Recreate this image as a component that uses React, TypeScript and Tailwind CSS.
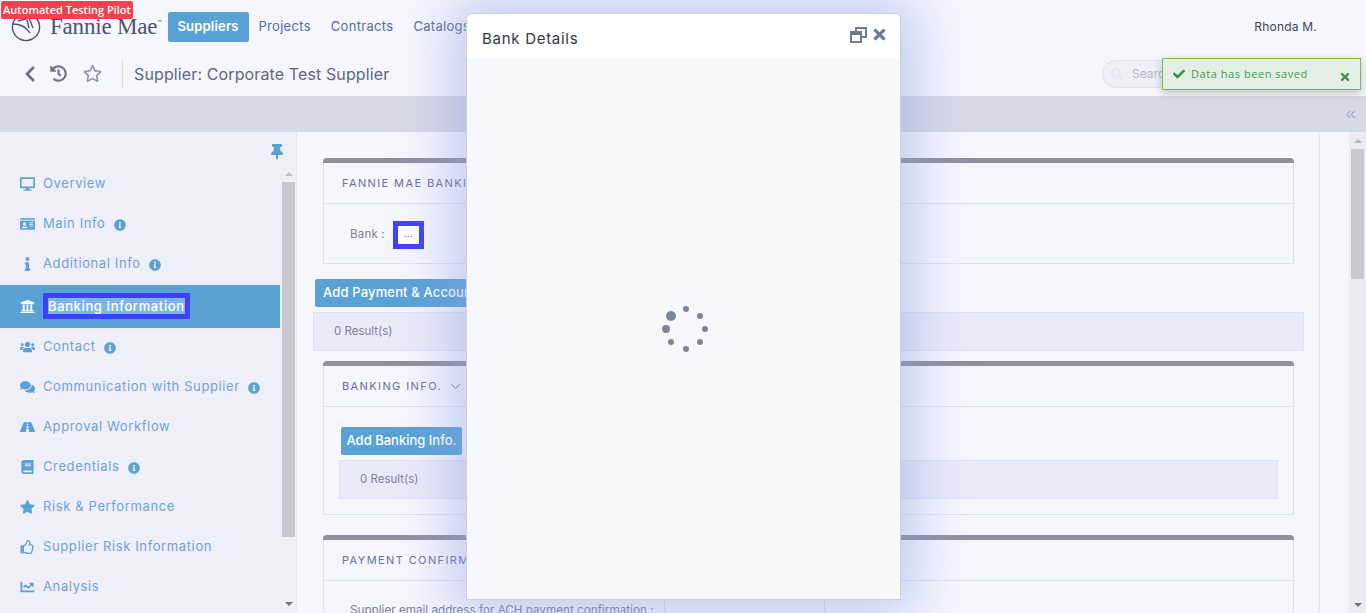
import { ChevronDown, ChevronsLeft } from "lucide-react";
import {
  FaBook,
  FaChartLine,
  FaCheck,
  FaChevronLeft,
  FaComments,
  FaDesktop,
  FaHistory,
  FaIdCard,
  FaInfo,
  FaInfoCircle,
  FaRegStar,
  FaRegThumbsUp,
  FaRoad,
  FaSearch,
  FaStar,
  FaThumbtack,
  FaTimes,
  FaUniversity,
  FaUsers,
} from "react-icons/fa";

const menu = [
  { label: "Overview", icon: FaDesktop },
  { label: "Main Info", icon: FaIdCard, info: true },
  { label: "Additional Info", icon: FaInfo, info: true },
  { label: "Banking Information", icon: FaUniversity, active: true },
  { label: "Contact", icon: FaUsers, info: true },
  { label: "Communication with Supplier", icon: FaComments, info: true },
  { label: "Approval Workflow", icon: FaRoad },
  { label: "Credentials", icon: FaBook, info: true },
  { label: "Risk & Performance", icon: FaStar },
  { label: "Supplier Risk Information", icon: FaRegThumbsUp },
  { label: "Analysis", icon: FaChartLine },
];

function Logo() {
  return (
    <svg width="30" height="30" viewBox="0 0 30 30" fill="none" stroke="#4a5470" strokeWidth="1.4">
      <circle cx="15" cy="15" r="13.6" />
      <path d="M2 12c7 0 13 3 17 9M7 9l11-3 4 10M16 8l2 8" />
    </svg>
  );
}

function RestoreIcon() {
  return (
    <svg width="17" height="16" viewBox="0 0 17 16" fill="none" stroke="#6f7a8f" strokeWidth="2">
      <path d="M6 4V1h10v9h-4" />
      <rect x="1" y="5" width="10" height="10" />
      <path d="M1 7h10" />
    </svg>
  );
}

function Card({ title, chevron, children }: { title: string; chevron?: boolean; children: React.ReactNode }) {
  return (
    <section className="shrink-0 border border-[#e0e1f2] border-t-0 rounded-t-[4px] ml-[26px] mr-[25px]">
      <div className="h-[5px] bg-[#8f8f9e] rounded-t-[4px] -mx-px" />
      <div className="h-[41px] flex items-center gap-[6px] pl-[18px] border-b border-[#e0e1f2] text-[11px] tracking-[1.4px] text-[#6a7196]">
        <span>{title}</span>
        {chevron && <ChevronDown size={15} strokeWidth={1.5} className="text-[#6a7196]" />}
      </div>
      {children}
    </section>
  );
}

function Results({ className }: { className: string }) {
  return (
    <div className={`shrink-0 h-[39px] flex items-center bg-[#e9ebf8] border border-[#dbe3f7] pl-5 text-[11.5px] text-[#7d8198] ${className}`}>
      0 Result(s)
    </div>
  );
}

export default function App() {
  return (
    <div className="relative h-[613px] overflow-hidden flex flex-col bg-[#f5f6fe] font-['Inter','Open_Sans',sans-serif]">
      {/* Верхнее меню */}
      <header className="h-[50px] shrink-0 flex items-center pt-[4px] pl-[11px] pr-[49px]">
        <Logo />
        <span className="ml-[9px] font-['Liberation_Serif',serif] text-[23px] tracking-[-0.2px] text-[#4a5470]">Fannie Mae</span>
        <span className="self-start mt-[15px] text-[7px] text-[#4a5470]">™</span>
        <a className="ml-[6px] h-[30px] w-[81px] shrink-0 flex items-center justify-center rounded-[2px] bg-[#5aa2d6] text-white text-[13px] font-semibold tracking-[0.2px]">
          Suppliers
        </a>
        <nav className="flex gap-5 ml-[10px] text-[13px] tracking-[0.3px] text-[#4f6fa8]">
          <a>Projects</a>
          <a>Contracts</a>
          <a>Catalogs</a>
        </nav>
        <span className="ml-auto text-[12px] tracking-[0.2px] text-[#3f4557]">Rhonda M.</span>
      </header>

      <div className="h-[46px] shrink-0 flex items-center pt-px pl-[21px] pr-[6px]">
        <FaChevronLeft className="text-[18px] text-[#76708f]" />
        <FaHistory className="ml-[11px] text-[17px] text-[#76708f]" />
        <FaRegStar className="ml-[16px] text-[19px] text-[#8c90ad]" />
        <div className="ml-[20px] w-px h-[30px] bg-[#dcdde8]" />
        <h1 className="ml-[11px] text-[16px] tracking-[0.12px] text-[#62677b]">Supplier: Corporate Test Supplier</h1>
        <div className="ml-auto mr-[158px] w-[100px] h-[28px] rounded-full border border-[#dfe0ec] bg-[#eeeff8] flex items-center gap-[9px] pl-2 text-[12px] text-[#b7b9cc] overflow-hidden">
          <FaSearch className="shrink-0 text-[#e4e5f2]" />
          Search
        </div>
      </div>

      <div className="h-[36px] shrink-0 bg-[#d6dae6] flex items-center justify-end pr-2">
        <ChevronsLeft size={15} strokeWidth={1.5} className="text-[#7f84a5]" />
      </div>

      <div className="flex flex-1 min-h-0">
        {/* Боковое меню */}
        <aside className="w-[297px] shrink-0 flex flex-col bg-[#eeeff8] border-r border-[#e6e7f3]">
          <div className="h-[33px] shrink-0 flex items-end justify-end pr-[11px] pb-[5px]">
            <FaThumbtack className="text-[16px] text-[#5aa2d6]" />
          </div>
          <div className="flex flex-1 min-h-0">
            <ul className="w-[280px] shrink-0 -mt-px text-[13px] tracking-[0.62px] text-[#6ea3d8]">
              {menu.map((item) =>
                item.active ? (
                  <li key={item.label} className="h-[43px] mt-px -mb-px pb-px flex items-center pl-5 bg-[#5aa2d6] text-white font-medium">
                    <item.icon className="w-[15px] text-[15px]" />
                    <span className="ml-2 border-[5px] border-[#4040ff] bg-[#7fb5e2] leading-[16px]">{item.label}</span>
                  </li>
                ) : (
                  <li key={item.label} className="h-10 flex items-center pl-5">
                    <item.icon className="w-[15px] text-[14px] text-[#5aa2d6]" />
                    <span className="ml-2">{item.label}</span>
                    {item.info && <FaInfoCircle className="ml-2 mt-[2px] text-[12px] text-[#5aa2d6]" />}
                  </li>
                ),
              )}
            </ul>
            <div className="w-[15px] ml-px flex flex-col items-center">
              <div className="h-[17px] shrink-0 flex items-center justify-center">
                <div className="border-x-[4px] border-b-[4px] border-x-transparent border-b-[#c0c1cc]" />
              </div>
              <div className="w-[13px] h-[355px] shrink-0 bg-[#c7c8d3]" />
              <div className="flex-1" />
              <div className="mb-[7px] border-x-[4px] border-t-[4px] border-x-transparent border-t-[#70717e]" />
            </div>
          </div>
        </aside>

        {/* Основная панель */}
        <main className="w-[1023px] shrink-0 flex flex-col pt-[26px] overflow-hidden border-r border-[#e0e1f2] rounded-tr-[4px]">
          <Card title="FANNIE MAE BANKING">
            <div className="h-[59px] flex items-center pt-[2px] pl-[26px] gap-[8px] text-[11.5px] tracking-[0.2px] text-[#7d8198]">
              Bank :
              <button className="w-[31px] h-[28px] flex items-center justify-center border-[5px] border-[#4040ff] bg-white pb-[4px] text-[10px] leading-none text-[#5a5f80]">...</button>
            </div>
          </Card>
          <div className="shrink-0 mt-[15px] ml-[18px] w-[300px] h-[28px] flex items-center pl-2 rounded-[2px] bg-[#5aa2d6] text-white text-[13px] tracking-[0.15px] font-medium">
            Add Payment &amp; Account
          </div>
          <Results className="mt-[5px] ml-4 mr-[15px]" />
          <div className="mt-[10px] shrink-0">
            <Card title="BANKING INFO." chevron>
              <div className="pt-[20px] pb-[15px] px-[15px]">
                <div className="ml-[2px] w-[121px] h-[28px] flex items-center justify-center rounded-[2px] bg-[#5aa2d6] text-white text-[13px] font-medium">
                  Add Banking Info.
                </div>
                <Results className="mt-[5px]" />
              </div>
            </Card>
          </div>
          <div className="mt-5 shrink-0">
            <Card title="PAYMENT CONFIRMATION">
              <div className="flex items-start h-[40px] pt-[20px] pl-[26px] text-[11.7px] text-[#7d8198]">
                <span className="w-[314px] shrink-0 whitespace-nowrap leading-[18px]">Supplier email address for ACH payment confirmation :</span>
                <div className="-mt-[10px] w-[161px] h-[40px] border border-[#e0e1f2]" />
              </div>
            </Card>
          </div>
        </main>

        <div className="flex-1" />
        <div className="w-[17px] shrink-0 bg-[#ecebf4] flex flex-col items-center">
          <div className="h-[17px] shrink-0 flex items-center justify-center">
            <div className="border-x-[4px] border-b-[4px] border-x-transparent border-b-[#b5b6c2]" />
          </div>
          <div className="w-[13px] h-[130px] shrink-0 bg-[#c7c8d3]" />
          <div className="flex-1" />
          <div className="mb-[6px] border-x-[4px] border-t-[4px] border-x-transparent border-t-[#70717e]" />
        </div>
      </div>

      {/* Оверлеи */}
      <div className="absolute left-px top-px w-[132px] h-[18px] flex items-center justify-center rounded-[2px] bg-[#f7404e] text-white text-[11px] font-semibold font-['Open_Sans',sans-serif]">
        Automated Testing Pilot
      </div>

      <div className="absolute left-[1162px] top-[58px] w-[199px] h-[32px] flex items-center pl-[10px] border border-[#74c04c] bg-[#e3efe2] text-[#3f9c55] text-[11px] tracking-[0.55px] shadow-[0_3px_8px_rgba(60,60,90,0.3)] font-['Open_Sans',sans-serif]">
        <FaCheck className="text-[12px] text-[#3c8f4e]" />
        <span className="ml-[6px]">Data has been saved</span>
        <FaTimes className="absolute right-[9px] top-[12px] text-[12px] text-[#3c8f4e]" />
      </div>

      <div className="absolute left-[466px] top-[13px] w-[435px] h-[587px] flex flex-col rounded-t-[5px] border border-[#cfd0d4] bg-[#f7f8fb] shadow-[0_0_55px_12px_rgba(140,160,225,0.55)]">
        <div className="h-[44px] shrink-0 flex items-center justify-between pl-[15px] pr-[12px] bg-white rounded-t-[5px]">
          <h2 className="mt-[6px] text-[15px] tracking-[0.72px] text-[#33363f]">Bank Details</h2>
          <div className="flex items-center gap-[4px] -mt-[3px]">
            <RestoreIcon />
            <FaTimes className="text-[17px] text-[#6f7a8f]" />
          </div>
        </div>
        <div className="flex-1 flex items-center justify-center pl-[3px]">
          <svg width="50" height="50" viewBox="660 304 50 50" fill="#7d8598">
            <circle cx="686" cy="309" r="3" />
            <circle cx="700" cy="316" r="3" />
            <circle cx="705" cy="329" r="3" />
            <circle cx="700" cy="342" r="3" />
            <circle cx="686" cy="349" r="3" />
            <circle cx="671" cy="342" r="3" />
            <circle cx="666" cy="329" r="4" />
            <circle cx="671" cy="316" r="5" />
          </svg>
        </div>
      </div>
    </div>
  );
}
